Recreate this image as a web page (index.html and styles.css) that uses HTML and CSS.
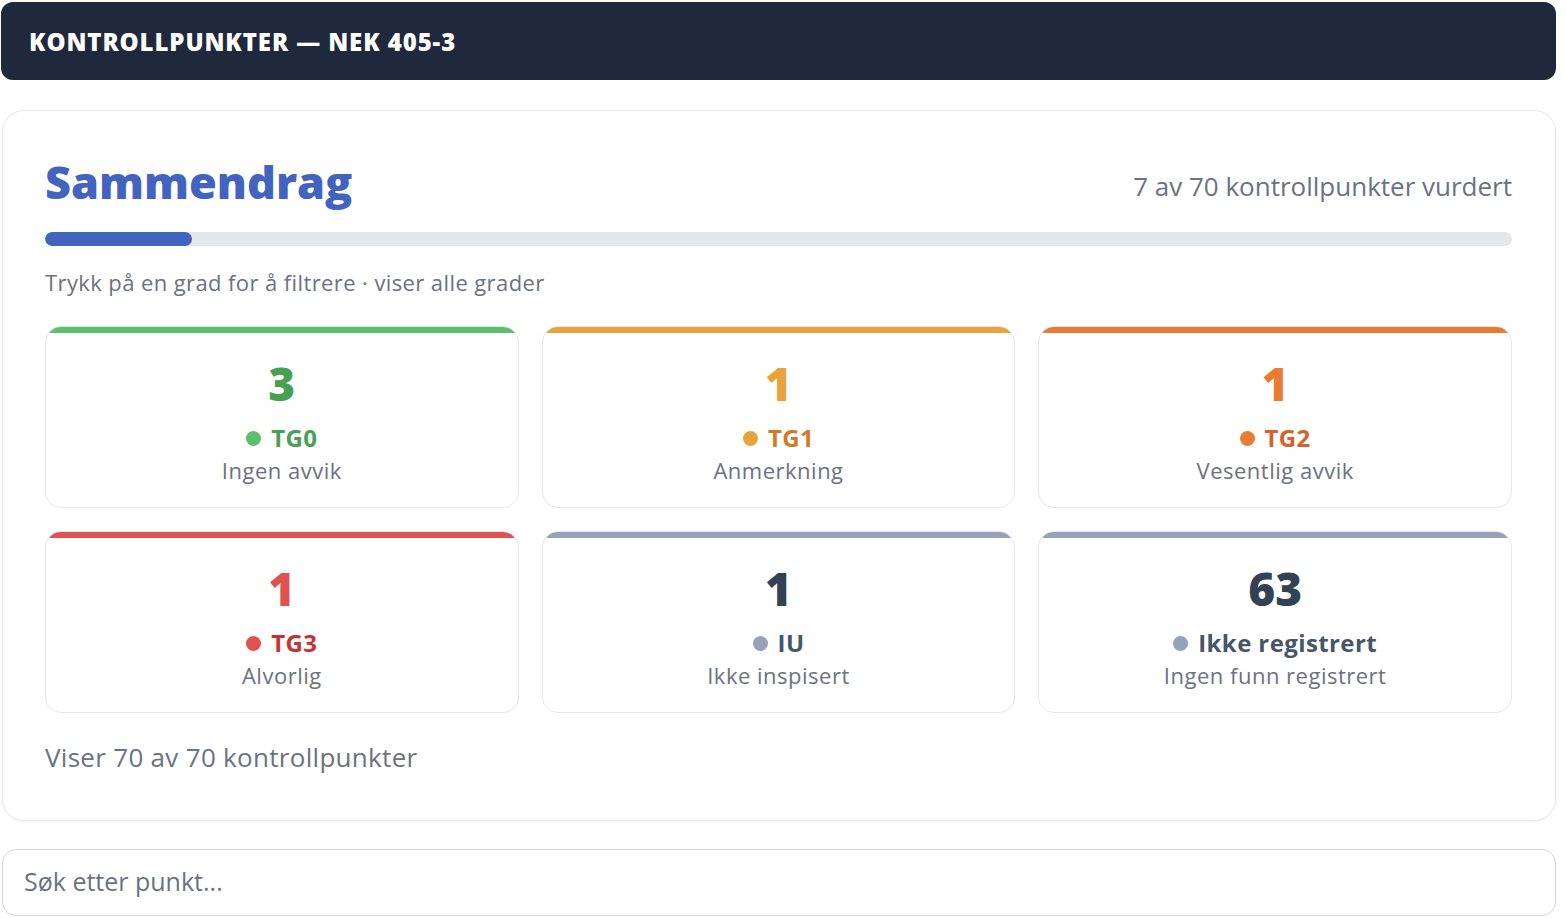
FILE: index.html
```html
<!DOCTYPE html>
<html lang="no">
<head>
    <meta charset="UTF-8">
    <meta name="viewport" content="width=device-width, initial-scale=1.0">
    <title>Kontrollpunkter - NEK 405-3</title>
    <link rel="stylesheet" href="styles.css">
</head>
<body>
    <div class="page">
        <header class="topbar">
            <h1>Kontrollpunkter — NEK 405-3</h1>
        </header>

        <section class="summary">
            <div class="summary-head">
                <h2>Sammendrag</h2>
                <span class="summary-count">7 av 70 kontrollpunkter vurdert</span>
            </div>
            <div class="progress">
                <div class="progress-fill" style="width: 10%"></div>
            </div>
            <p class="hint">Trykk på en grad for å filtrere · viser alle grader</p>

            <div class="grades">
                <button class="grade tg0">
                    <span class="grade-bar"></span>
                    <span class="grade-num">3</span>
                    <span class="grade-label"><i class="dot"></i>TG0</span>
                    <span class="grade-desc">Ingen avvik</span>
                </button>
                <button class="grade tg1">
                    <span class="grade-bar"></span>
                    <span class="grade-num">1</span>
                    <span class="grade-label"><i class="dot"></i>TG1</span>
                    <span class="grade-desc">Anmerkning</span>
                </button>
                <button class="grade tg2">
                    <span class="grade-bar"></span>
                    <span class="grade-num">1</span>
                    <span class="grade-label"><i class="dot"></i>TG2</span>
                    <span class="grade-desc">Vesentlig avvik</span>
                </button>
                <button class="grade tg3">
                    <span class="grade-bar"></span>
                    <span class="grade-num">1</span>
                    <span class="grade-label"><i class="dot"></i>TG3</span>
                    <span class="grade-desc">Alvorlig</span>
                </button>
                <button class="grade iu">
                    <span class="grade-bar"></span>
                    <span class="grade-num">1</span>
                    <span class="grade-label"><i class="dot"></i>IU</span>
                    <span class="grade-desc">Ikke inspisert</span>
                </button>
                <button class="grade none">
                    <span class="grade-bar"></span>
                    <span class="grade-num">63</span>
                    <span class="grade-label"><i class="dot"></i>Ikke registrert</span>
                    <span class="grade-desc">Ingen funn registrert</span>
                </button>
            </div>

            <p class="shown">Viser 70 av 70 kontrollpunkter</p>
        </section>

        <input class="search" type="text" placeholder="Søk etter punkt...">
    </div>
</body>
</html>
```

FILE: styles.css
```css
body {
    margin: 0;
    font-family: "Open Sans", "Noto Sans", sans-serif;
    color: #374151;
    background: #ffffff;
}
.page {
    width: 1554px;
    padding: 2px 0 0 2px;
}
.topbar {
    background: #1f293b;
    border-radius: 12px;
    height: 78px;
    display: flex;
    align-items: center;
    padding: 0 28px;
    margin-left: -1px;
}
.topbar h1 {
    margin: 0;
    color: #ffffff;
    font-size: 24px;
    font-weight: 800;
    text-transform: uppercase;
    letter-spacing: 0.9px;
}
.summary {
    margin-top: 30px;
    border: 1px solid #e5e7eb;
    border-radius: 22px;
    box-shadow: 0 1px 3px rgba(0, 0, 0, 0.05);
    padding: 42px 43px 45px 42px;
}
.summary-head {
    display: flex;
    justify-content: space-between;
    align-items: center;
}
.summary-head h2 {
    margin: 0;
    font-size: 45px;
    font-weight: 800;
    color: #4263be;
    line-height: 58px;
}
.summary-count {
    font-size: 26px;
    color: #6b7280;
    padding-top: 8px;
}
.progress {
    margin-top: 21px;
    height: 14px;
    background: #e5e7eb;
    border-radius: 7px;
    overflow: hidden;
}
.progress-fill {
    height: 100%;
    background: #4263be;
    border-radius: 7px;
}
.hint {
    margin: 21px 0 0 0;
    font-size: 22px;
    letter-spacing: 0.4px;
    color: #6b7280;
}
.grades {
    margin-top: 29px;
    display: grid;
    grid-template-columns: repeat(3, 1fr);
    gap: 23px;
}
.grade {
    display: flex;
    flex-direction: column;
    align-items: center;
    height: 182px;
    padding: 0;
    background: #ffffff;
    border: 1px solid #e5e7eb;
    border-radius: 16px;
    overflow: hidden;
    font-family: inherit;
    cursor: pointer;
}
.grade-bar {
    align-self: stretch;
    height: 7px;
    margin: -1px -1px 0 -1px;
}
.grade-num {
    margin-top: 22px;
    font-size: 46px;
    font-weight: 800;
    line-height: 56px;
}
.grade-label {
    margin-top: 12px;
    display: flex;
    align-items: center;
    gap: 10px;
    font-size: 24px;
    font-weight: 700;
    line-height: 30px;
    letter-spacing: 0.4px;
}
.dot {
    width: 15px;
    height: 15px;
    border-radius: 50%;
}
.grade-desc {
    margin-top: 2px;
    font-size: 22px;
    letter-spacing: 0.5px;
    color: #6b7280;
    line-height: 30px;
}
.tg0 .grade-bar, .tg0 .dot { background: #5cbf6b; }
.tg0 .grade-num, .tg0 .grade-label { color: #48a055; }
.tg1 .grade-bar, .tg1 .dot { background: #e8a33c; }
.tg1 .grade-num { color: #e8a33c; }
.tg1 .grade-label { color: #d27a26; }
.tg2 .grade-bar, .tg2 .dot { background: #e97c35; }
.tg2 .grade-num { color: #e97c35; }
.tg2 .grade-label { color: #d9602a; }
.tg3 .grade-bar, .tg3 .dot { background: #e05252; }
.tg3 .grade-num { color: #e05252; }
.tg3 .grade-label { color: #c93232; }
.iu .grade-bar, .iu .dot, .none .grade-bar, .none .dot { background: #94a3b8; }
.iu .grade-num, .none .grade-num { color: #334155; }
.iu .grade-label, .none .grade-label { color: #475569; }
.shown {
    margin: 26px 0 0 0;
    font-size: 26px;
    letter-spacing: 0.3px;
    color: #6b7280;
}
.search {
    display: block;
    box-sizing: border-box;
    width: 100%;
    margin-top: 28px;
    height: 67px;
    border: 1px solid #d1d5db;
    border-radius: 14px;
    padding: 0 21px 3px 21px;
    font-family: inherit;
    font-size: 25px;
    color: #374151;
}
.search::placeholder {
    color: #6b7280;
}
```
